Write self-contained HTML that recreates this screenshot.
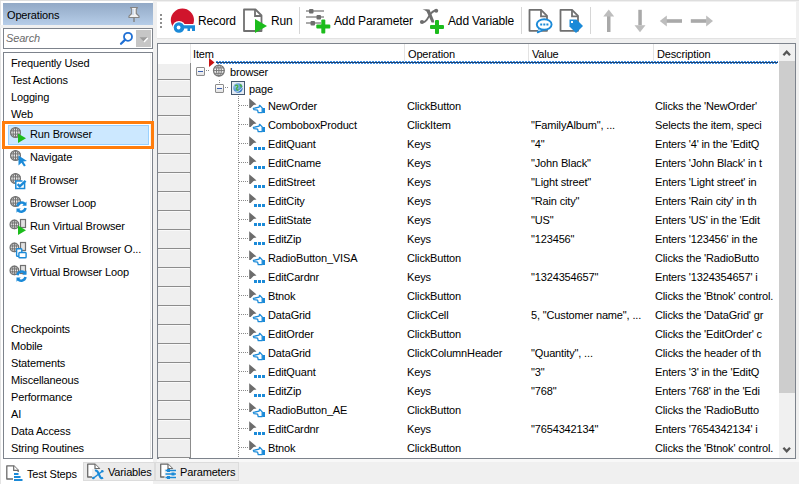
<!DOCTYPE html><html><head><meta charset="utf-8"><style>
*{margin:0;padding:0;box-sizing:border-box}
html,body{width:799px;height:484px;overflow:hidden;background:#f0f0f0;font-family:"Liberation Sans",sans-serif;font-size:11px;color:#000}
.a{position:absolute}
.t{position:absolute;white-space:nowrap;letter-spacing:-0.15px;line-height:14px}
svg{position:absolute;overflow:visible}
</style></head><body>
<div class="a" style="left:0px;top:0px;width:153px;height:484px;background:#fff;border-left:1px solid #e3e3e3"></div>
<div class="a" style="left:0px;top:0px;width:799px;height:1px;background:#dedede"></div>
<div class="a" style="left:0px;top:25px;width:153px;height:3px;background:#f0f0f0"></div>
<div class="a" style="left:3px;top:3px;width:150px;height:22px;background:linear-gradient(#92a9c6,#b6cde8)"></div>
<div class="t" style="left:7px;top:8px;">Operations</div>
<svg style="left:126px;top:6px" width="16" height="16" viewBox="0 0 16 16"><path d="M4.5 1.5h7l-1.2 1.6v4.4l2.7 2.7v1.3H3v-1.3l2.7-2.7V3.1z" fill="#f2f2f2" stroke="#858585" stroke-width="1.2" stroke-linejoin="round"/><path d="M7 3v6" stroke="#c8d8ec" stroke-width="1.5"/><path d="M8 11.5v4.5" stroke="#858585" stroke-width="1.5"/></svg>
<div class="a" style="left:3px;top:28px;width:150px;height:21px;background:#fff;border:1px solid #7d838c"></div>
<div class="t" style="left:6px;top:31px;font-style:italic;color:#6a6a6a">Search</div>
<svg style="left:117px;top:30px" width="16" height="16" viewBox="0 0 16 16"><circle cx="11" cy="6.8" r="4" fill="none" stroke="#1f6fd4" stroke-width="1.8"/><path d="M8.2 9.6L4 13.8" stroke="#1f6fd4" stroke-width="2.2" stroke-linecap="round"/></svg>
<div class="a" style="left:136px;top:30px;width:15px;height:17px;background:#c6c6c6"></div>
<svg style="left:136px;top:30px" width="15" height="17" viewBox="0 0 15 17"><path d="M3.5 7.3h8l-4 4z" fill="#9c9c9c"/><path d="M8 12l3.8-4" stroke="#fff" stroke-width="1.3"/></svg>
<div class="a" style="left:3px;top:52px;width:150px;height:407px;background:#fff;border:1px solid #7d838c"></div>
<div class="a" style="left:150px;top:53px;width:1px;height:266px;background:#f3f3f3"></div>
<div class="a" style="left:150px;top:319px;width:1px;height:139px;background:#e4e4e4"></div>
<div class="t" style="left:11px;top:56px;">Frequently Used</div>
<div class="t" style="left:11px;top:73px;">Test Actions</div>
<div class="t" style="left:11px;top:90px;">Logging</div>
<div class="t" style="left:11px;top:107px;">Web</div>
<div class="a" style="left:2px;top:121px;width:152px;height:28px;border:3px solid #ff7d0c"></div>
<div class="a" style="left:8px;top:125px;width:141px;height:20px;background:#cce8ff;border:1px solid #99d1ff"></div>
<div class="t" style="left:30px;top:127px;">Run Browser</div>
<svg style="left:0px;top:0px" width="30" height="1" viewBox="0 0 30 1"><circle cx="15.5" cy="132.5" r="4.9" fill="#e9e9e9" stroke="#737373" stroke-width="1.3"/><ellipse cx="15.5" cy="132.5" rx="2.31" ry="4.9" fill="none" stroke="#737373" stroke-width="1"/><path d="M15.5 127.6v9.8M10.6 130.85h9.8M10.6 134.15h9.8" stroke="#737373" stroke-width="1"/><path d="M18 133.5v9.5l8-4.75z" fill="#1cbc1c"/></svg>
<div class="t" style="left:30px;top:150px;">Navigate</div>
<svg style="left:0px;top:0px" width="30" height="1" viewBox="0 0 30 1"><circle cx="15.5" cy="155.5" r="4.9" fill="#e9e9e9" stroke="#737373" stroke-width="1.3"/><ellipse cx="15.5" cy="155.5" rx="2.31" ry="4.9" fill="none" stroke="#737373" stroke-width="1"/><path d="M15.5 150.6v9.8M10.6 153.85h9.8M10.6 157.15h9.8" stroke="#737373" stroke-width="1"/><path d="M18.5 155.5l8.5 5.5-3.8.6 2.6 3.9-1.8 1.1-2.5-3.9-3 2.7z" fill="#1b8ad8"/></svg>
<div class="t" style="left:30px;top:173px;">If Browser</div>
<svg style="left:0px;top:0px" width="30" height="1" viewBox="0 0 30 1"><circle cx="15.5" cy="178.5" r="4.9" fill="#e9e9e9" stroke="#737373" stroke-width="1.3"/><ellipse cx="15.5" cy="178.5" rx="2.31" ry="4.9" fill="none" stroke="#737373" stroke-width="1"/><path d="M15.5 173.6v9.8M10.6 176.85h9.8M10.6 180.15h9.8" stroke="#737373" stroke-width="1"/><rect x="15.8" y="181" width="8.8" height="7.5" fill="#fff" stroke="#1b8ad8" stroke-width="1.5"/><rect x="22.5" y="179.5" width="4" height="3.5" fill="#fff"/><path d="M17.6 184.2l2.2 2.2 5.8-5.6" fill="none" stroke="#1b8ad8" stroke-width="2.4"/></svg>
<div class="t" style="left:30px;top:196px;">Browser Loop</div>
<svg style="left:0px;top:0px" width="30" height="1" viewBox="0 0 30 1"><circle cx="15.5" cy="201.5" r="4.9" fill="#e9e9e9" stroke="#737373" stroke-width="1.3"/><ellipse cx="15.5" cy="201.5" rx="2.31" ry="4.9" fill="none" stroke="#737373" stroke-width="1"/><path d="M15.5 196.6v9.8M10.6 199.85h9.8M10.6 203.15h9.8" stroke="#737373" stroke-width="1"/><g transform="translate(16.5,200) scale(0.95) translate(-10,-5.5)"><path d="M11 12a4.5 4.5 0 0 1 8-2" fill="none" stroke="#1b8ad8" stroke-width="2.6"/><path d="M20.5 7v4.5h-4.5z" fill="#1b8ad8"/><path d="M19.5 14a4.5 4.5 0 0 1-8 2" fill="none" stroke="#1b8ad8" stroke-width="2.6"/><path d="M10 19v-4.5h4.5z" fill="#1b8ad8"/></g></svg>
<div class="t" style="left:30px;top:219px;">Run Virtual Browser</div>
<svg style="left:0px;top:0px" width="30" height="1" viewBox="0 0 30 1"><rect x="20.5" y="219.5" width="5" height="8" fill="#e2e2e2" stroke="#707070" stroke-width="1.2"/><circle cx="14.4" cy="224.4" r="4.300000000000001" fill="#e9e9e9" stroke="#737373" stroke-width="1.3"/><ellipse cx="14.4" cy="224.4" rx="2.0580000000000003" ry="4.300000000000001" fill="none" stroke="#737373" stroke-width="1"/><path d="M14.4 220.1v8.600000000000001M10.1 222.93h8.600000000000001M10.1 225.87h8.600000000000001" stroke="#737373" stroke-width="1"/><path d="M18 225.5v9.5l8-4.75z" fill="#1cbc1c"/></svg>
<div class="t" style="left:30px;top:242px;">Set Virtual Browser O...</div>
<svg style="left:0px;top:0px" width="30" height="1" viewBox="0 0 30 1"><rect x="20.5" y="242.5" width="5" height="8" fill="#e2e2e2" stroke="#707070" stroke-width="1.2"/><circle cx="14.4" cy="247.4" r="4.300000000000001" fill="#e9e9e9" stroke="#737373" stroke-width="1.3"/><ellipse cx="14.4" cy="247.4" rx="2.0580000000000003" ry="4.300000000000001" fill="none" stroke="#737373" stroke-width="1"/><path d="M14.4 243.1v8.600000000000001M10.1 245.93h8.600000000000001M10.1 248.87h8.600000000000001" stroke="#737373" stroke-width="1"/><rect x="16.6" y="248.8" width="5.2" height="7.4" rx="0.8" fill="#fff" stroke="#1b8ad8" stroke-width="1.4"/><rect x="18.9" y="252.5" width="7.2" height="5.3" rx="0.8" fill="#fff" stroke="#1b8ad8" stroke-width="1.4"/></svg>
<div class="t" style="left:30px;top:265px;">Virtual Browser Loop</div>
<svg style="left:0px;top:0px" width="30" height="1" viewBox="0 0 30 1"><rect x="20.5" y="265.5" width="5" height="8" fill="#e2e2e2" stroke="#707070" stroke-width="1.2"/><circle cx="14.4" cy="270.4" r="4.300000000000001" fill="#e9e9e9" stroke="#737373" stroke-width="1.3"/><ellipse cx="14.4" cy="270.4" rx="2.0580000000000003" ry="4.300000000000001" fill="none" stroke="#737373" stroke-width="1"/><path d="M14.4 266.1v8.600000000000001M10.1 268.92999999999995h8.600000000000001M10.1 271.87h8.600000000000001" stroke="#737373" stroke-width="1"/><g transform="translate(16.5,269) scale(0.95) translate(-10,-5.5)"><path d="M11 12a4.5 4.5 0 0 1 8-2" fill="none" stroke="#1b8ad8" stroke-width="2.6"/><path d="M20.5 7v4.5h-4.5z" fill="#1b8ad8"/><path d="M19.5 14a4.5 4.5 0 0 1-8 2" fill="none" stroke="#1b8ad8" stroke-width="2.6"/><path d="M10 19v-4.5h4.5z" fill="#1b8ad8"/></g></svg>
<div class="t" style="left:11px;top:322px;">Checkpoints</div>
<div class="t" style="left:11px;top:339px;">Mobile</div>
<div class="t" style="left:11px;top:356px;">Statements</div>
<div class="t" style="left:11px;top:373px;">Miscellaneous</div>
<div class="t" style="left:11px;top:390px;">Performance</div>
<div class="t" style="left:11px;top:407px;">AI</div>
<div class="t" style="left:11px;top:424px;">Data Access</div>
<div class="t" style="left:11px;top:441px;">String Routines</div>
<div class="a" style="left:157px;top:2px;width:639px;height:37px;background:#fff"></div>
<div class="a" style="left:157px;top:38px;width:639px;height:1px;background:#e2e2e2"></div>
<div class="a" style="left:160px;top:14px;width:2px;height:2px;background:#8f8f8f"></div>
<div class="a" style="left:160px;top:18px;width:2px;height:2px;background:#8f8f8f"></div>
<div class="a" style="left:160px;top:22px;width:2px;height:2px;background:#8f8f8f"></div>
<div class="a" style="left:160px;top:26px;width:2px;height:2px;background:#8f8f8f"></div>
<svg style="left:168px;top:6px" width="30" height="30" viewBox="0 0 30 30"><circle cx="14.4" cy="14.1" r="11.6" fill="#d0142c"/><circle cx="11" cy="21.5" r="6.6" fill="#fff"/><path d="M14 18h14v9H14z" fill="#fff"/><circle cx="11" cy="21.5" r="5.3" fill="#1b8ad8"/><circle cx="10.6" cy="21.5" r="1.9" fill="#fff"/><path d="M14 19.2h13v3.3H14zM19.5 22h2.5v3H19.5zM24 22h3v3h-3z" fill="#1b8ad8"/></svg>
<div class="t" style="left:198px;top:14px;font-size:12px">Record</div>
<svg style="left:240px;top:6px" width="32" height="30" viewBox="0 0 32 30"><path d="M4 3.5h11.5l6 6V25H4z" fill="#fff" stroke="#707070" stroke-width="1.8" stroke-linejoin="round"/><path d="M15 3.5v6.5h6.5" fill="none" stroke="#707070" stroke-width="1.8"/><path d="M15 13v14l12-7z" fill="#1cbc1c"/></svg>
<div class="t" style="left:271px;top:14px;font-size:12px">Run</div>
<div class="a" style="left:299px;top:7px;width:1px;height:27px;background:#d6d6d6"></div>
<svg style="left:304px;top:6px" width="30" height="30" viewBox="0 0 30 30"><path d="M2 5h18M2 11h18M2 17h18" stroke="#8e8e8e" stroke-width="1.7"/><rect x="5" y="3" width="4.5" height="4.5" rx="1" fill="#6e6e6e"/><rect x="12.5" y="9" width="4.5" height="4.5" rx="1" fill="#6e6e6e"/><rect x="6.5" y="15" width="4.5" height="4.5" rx="1" fill="#6e6e6e"/><path d="M17 13.5h5v5h5v5h-5v5h-5v-5h-5v-5h5z" fill="#fff"/><rect x="17.3" y="13.5" width="4" height="14" rx="1" fill="#1cbc1c"/><rect x="12.3" y="18.5" width="14" height="4" rx="1" fill="#1cbc1c"/></svg>
<div class="t" style="left:334px;top:14px;font-size:12px">Add Parameter</div>
<svg style="left:418px;top:6px" width="30" height="30" viewBox="0 0 30 30"><path d="M4.5 3.6Q8 3 11.5 3.5L16.8 16.6H13.6L8.6 5.6Q7 4.3 4.5 3.6z" fill="#6e6e6e"/><path d="M18.5 4.5Q14.5 4.5 11.5 9.5L8.5 14.2Q6 17 3.8 16.3" fill="none" stroke="#6e6e6e" stroke-width="1.8"/><circle cx="18.2" cy="4.8" r="2" fill="#6e6e6e"/><circle cx="4" cy="16" r="2.1" fill="#6e6e6e"/><path d="M17 14h4v5h5v4h-5v5h-4v-5h-5v-4h5z" fill="#fff" stroke="#fff" stroke-width="1.5"/><rect x="17" y="14" width="4" height="14" rx="1" fill="#1cbc1c"/><rect x="12" y="19" width="14" height="4" rx="1" fill="#1cbc1c"/></svg>
<div class="t" style="left:448px;top:14px;font-size:12px">Add Variable</div>
<div class="a" style="left:521px;top:7px;width:1px;height:27px;background:#d6d6d6"></div>
<svg style="left:527px;top:8px" width="60" height="28" viewBox="0 0 60 28"><path d="M2.5 1.8h11.5l6 6V22.8H2.5z" fill="#fff" stroke="#707070" stroke-width="1.8" stroke-linejoin="round"/><path d="M14 1.8v6.5h6" fill="none" stroke="#707070" stroke-width="1.8"/><path d="M12.5 20l-1.8 4.5 5-2.3" fill="#fff" stroke="#1b8ad8" stroke-width="1.6" stroke-linejoin="round"/><ellipse cx="17.2" cy="16.5" rx="7.4" ry="5.2" fill="#fff" stroke="#1b8ad8" stroke-width="1.9"/><path d="M11.5 21.3l-.6 1.8 2.2-1" fill="#fff"/><path d="M13.2 16.5h2M16.3 16.5h2M19.4 16.5h2" stroke="#1b8ad8" stroke-width="2"/><path d="M33.5 1.8h11.5l6 6V22.8H33.5z" fill="#fff" stroke="#707070" stroke-width="1.8" stroke-linejoin="round"/><path d="M45 1.8v6.5h6" fill="none" stroke="#707070" stroke-width="1.8"/><path d="M42.5 11.5h7l6.5 6.5-7 7-6.5-6.5z" fill="#1b8ad8"/><rect x="44" y="13" width="2" height="2" fill="#fff"/></svg>
<div class="a" style="left:590px;top:7px;width:1px;height:27px;background:#d6d6d6"></div>
<svg style="left:600px;top:6px" width="120" height="30" viewBox="0 0 120 30"><rect x="7" y="9.5" width="3.5" height="16.5" fill="#a9a9a9"/><path d="M3.3 10.5L8.75 3.5 14.2 10.5z" fill="#bdbdbd"/><rect x="38.3" y="3.8" width="3.5" height="15.5" fill="#a9a9a9"/><path d="M34.5 19.2h11L40 26.2z" fill="#bdbdbd"/><rect x="66" y="13.2" width="16" height="3.6" fill="#a9a9a9"/><path d="M59.8 15L66.8 9.5V20.5z" fill="#bdbdbd"/><rect x="90.8" y="13.2" width="16" height="3.6" fill="#a9a9a9"/><path d="M113 15L106.2 9.5V20.5z" fill="#bdbdbd"/></svg>
<div class="a" style="left:157px;top:43px;width:639px;height:416px;background:#fff;border:1px solid #7d838c"></div>
<div class="t" style="left:193px;top:47px;">Item</div>
<div class="t" style="left:408px;top:47px;">Operation</div>
<div class="t" style="left:532px;top:47px;">Value</div>
<div class="t" style="left:657px;top:47px;">Description</div>
<div class="a" style="left:404px;top:44px;width:1px;height:17px;background:#e3e3e3"></div>
<div class="a" style="left:528px;top:44px;width:1px;height:17px;background:#e3e3e3"></div>
<div class="a" style="left:653px;top:44px;width:1px;height:17px;background:#e3e3e3"></div>
<div class="a" style="left:190px;top:44px;width:1px;height:20px;background:#e6e6e6"></div>
<div class="a" style="left:190px;top:63px;width:1px;height:395px;background:#8c8c8c"></div>
<div class="a" style="left:158px;top:64px;width:32px;height:394px;background:#efefef"></div>
<div class="a" style="left:158px;top:79px;width:32px;height:1px;background:#8c8c8c"></div>
<div class="a" style="left:159px;top:80px;width:30px;height:1px;background:#f9f9f9"></div>
<div class="a" style="left:158px;top:96px;width:32px;height:1px;background:#8c8c8c"></div>
<div class="a" style="left:159px;top:97px;width:30px;height:1px;background:#f9f9f9"></div>
<div class="a" style="left:158px;top:115px;width:32px;height:1px;background:#8c8c8c"></div>
<div class="a" style="left:159px;top:116px;width:30px;height:1px;background:#f9f9f9"></div>
<div class="a" style="left:158px;top:134px;width:32px;height:1px;background:#8c8c8c"></div>
<div class="a" style="left:159px;top:135px;width:30px;height:1px;background:#f9f9f9"></div>
<div class="a" style="left:158px;top:153px;width:32px;height:1px;background:#8c8c8c"></div>
<div class="a" style="left:159px;top:154px;width:30px;height:1px;background:#f9f9f9"></div>
<div class="a" style="left:158px;top:172px;width:32px;height:1px;background:#8c8c8c"></div>
<div class="a" style="left:159px;top:173px;width:30px;height:1px;background:#f9f9f9"></div>
<div class="a" style="left:158px;top:191px;width:32px;height:1px;background:#8c8c8c"></div>
<div class="a" style="left:159px;top:192px;width:30px;height:1px;background:#f9f9f9"></div>
<div class="a" style="left:158px;top:210px;width:32px;height:1px;background:#8c8c8c"></div>
<div class="a" style="left:159px;top:211px;width:30px;height:1px;background:#f9f9f9"></div>
<div class="a" style="left:158px;top:229px;width:32px;height:1px;background:#8c8c8c"></div>
<div class="a" style="left:159px;top:230px;width:30px;height:1px;background:#f9f9f9"></div>
<div class="a" style="left:158px;top:248px;width:32px;height:1px;background:#8c8c8c"></div>
<div class="a" style="left:159px;top:249px;width:30px;height:1px;background:#f9f9f9"></div>
<div class="a" style="left:158px;top:267px;width:32px;height:1px;background:#8c8c8c"></div>
<div class="a" style="left:159px;top:268px;width:30px;height:1px;background:#f9f9f9"></div>
<div class="a" style="left:158px;top:286px;width:32px;height:1px;background:#8c8c8c"></div>
<div class="a" style="left:159px;top:287px;width:30px;height:1px;background:#f9f9f9"></div>
<div class="a" style="left:158px;top:305px;width:32px;height:1px;background:#8c8c8c"></div>
<div class="a" style="left:159px;top:306px;width:30px;height:1px;background:#f9f9f9"></div>
<div class="a" style="left:158px;top:324px;width:32px;height:1px;background:#8c8c8c"></div>
<div class="a" style="left:159px;top:325px;width:30px;height:1px;background:#f9f9f9"></div>
<div class="a" style="left:158px;top:343px;width:32px;height:1px;background:#8c8c8c"></div>
<div class="a" style="left:159px;top:344px;width:30px;height:1px;background:#f9f9f9"></div>
<div class="a" style="left:158px;top:362px;width:32px;height:1px;background:#8c8c8c"></div>
<div class="a" style="left:159px;top:363px;width:30px;height:1px;background:#f9f9f9"></div>
<div class="a" style="left:158px;top:381px;width:32px;height:1px;background:#8c8c8c"></div>
<div class="a" style="left:159px;top:382px;width:30px;height:1px;background:#f9f9f9"></div>
<div class="a" style="left:158px;top:400px;width:32px;height:1px;background:#8c8c8c"></div>
<div class="a" style="left:159px;top:401px;width:30px;height:1px;background:#f9f9f9"></div>
<div class="a" style="left:158px;top:419px;width:32px;height:1px;background:#8c8c8c"></div>
<div class="a" style="left:159px;top:420px;width:30px;height:1px;background:#f9f9f9"></div>
<div class="a" style="left:158px;top:438px;width:32px;height:1px;background:#8c8c8c"></div>
<div class="a" style="left:159px;top:439px;width:30px;height:1px;background:#f9f9f9"></div>
<div class="a" style="left:158px;top:457px;width:32px;height:1px;background:#8c8c8c"></div>
<div class="a" style="left:159px;top:458px;width:30px;height:1px;background:#f9f9f9"></div>
<div class="a" style="left:779px;top:44px;width:16px;height:414px;background:#f0f0f0"></div>
<div class="a" style="left:779px;top:61px;width:16px;height:332px;background:#cdcdcd"></div>
<svg style="left:779px;top:44px" width="16" height="17" viewBox="0 0 16 17"><path d="M4.4 11.2L7.7 7.6 11 11.2" fill="none" stroke="#555" stroke-width="2.3"/></svg>
<svg style="left:779px;top:441px" width="16" height="17" viewBox="0 0 16 17"><path d="M4.4 6.8L7.7 10.4 11 6.8" fill="none" stroke="#555" stroke-width="2.3"/></svg>
<div class="a" style="left:216px;top:61px;width:562px;height:1px;background:repeating-linear-gradient(90deg,#3d8fe8 0 2px,transparent 2px 3px)"></div>
<div class="a" style="left:216px;top:62px;width:562px;height:1px;background:#20446e"></div>
<div class="a" style="left:217px;top:63px;width:561px;height:1px;background:repeating-linear-gradient(90deg,#3d8fe8 0 2px,transparent 2px 3px)"></div>
<svg style="left:208px;top:57px" width="8" height="11" viewBox="0 0 8 11"><path d="M1 1l5.5 4.5L1 10z" fill="#c81414"/></svg>
<div class="a" style="left:206px;top:70px;width:4px;height:1px;background:repeating-linear-gradient(90deg,#8a8a8a 0 1px,transparent 1px 2px)"></div>
<div class="a" style="left:219px;top:80px;width:1px;height:4px;background:repeating-linear-gradient(#8a8a8a 0 1px,transparent 1px 2px)"></div>
<div class="a" style="left:225px;top:87px;width:4px;height:1px;background:repeating-linear-gradient(90deg,#8a8a8a 0 1px,transparent 1px 2px)"></div>
<div class="a" style="left:238px;top:96px;width:1px;height:363px;background:repeating-linear-gradient(#8a8a8a 0 1px,transparent 1px 2px)"></div>
<div class="a" style="left:196px;top:67px;width:9px;height:9px;border:1px solid #8c8c8c;border-radius:1px;background:linear-gradient(#fff,#e3e3e3)"></div>
<div class="a" style="left:198px;top:71px;width:5px;height:1px;background:#3a5fb0"></div>
<div class="a" style="left:215px;top:84px;width:9px;height:9px;border:1px solid #8c8c8c;border-radius:1px;background:linear-gradient(#fff,#e3e3e3)"></div>
<div class="a" style="left:217px;top:88px;width:5px;height:1px;background:#3a5fb0"></div>
<svg style="left:212px;top:64px" width="14" height="14" viewBox="0 0 14 14"><circle cx="6.9" cy="6.6" r="5.4" fill="#f4f4f4" stroke="#777" stroke-width="1.3"/><ellipse cx="6.9" cy="6.6" rx="2.43" ry="5.4" fill="none" stroke="#777" stroke-width="1"/><path d="M1.5 6.6h10.8M2.5 3.8999999999999995h8.8M2.5 9.3h8.8M6.9 1.1999999999999993v10.8" stroke="#777" stroke-width="1"/></svg>
<svg style="left:231px;top:81px" width="15" height="14" viewBox="0 0 15 14"><defs><radialGradient id="pg" cx="0.35" cy="0.35" r="0.7"><stop offset="0" stop-color="#9fd0f5"/><stop offset="1" stop-color="#2a72c0"/></radialGradient></defs><rect x="0.5" y="0.5" width="13" height="13" fill="#e4ebf3" stroke="#45586f"/><circle cx="7" cy="7" r="4.8" fill="url(#pg)"/><path d="M4.2 4.8c1.2-1 2.6-.6 2.6.8s-1.8 1-1.3 2.3 1.8 1 2.2 1.8M8.8 3.5c.9.5 1.8 1.4 1.6 2.8" stroke="#4eb04a" stroke-width="1.5" fill="none"/><path d="M2.2 10.2c2 1.5 6.5.8 9.8-4.5" stroke="#e8f0ff" stroke-width="0.8" fill="none"/></svg>
<div class="t" style="left:230px;top:65px;">browser</div>
<div class="t" style="left:249px;top:82px;">page</div>
<div class="t" style="left:268px;top:99px;">NewOrder</div>
<div class="t" style="left:407px;top:99px;">ClickButton</div>
<div class="t" style="left:531px;top:99px;"></div>
<div class="t" style="left:655px;top:99px;">Clicks the 'NewOrder'</div>
<div class="a" style="left:239px;top:105px;width:9px;height:1px;background:repeating-linear-gradient(90deg,#8a8a8a 0 1px,transparent 1px 2px)"></div>
<svg style="left:249px;top:98px" width="18" height="16" viewBox="0 0 18 16"><path d="M0.2 0.2L7.5 6.5 4.6 7 1.6 9.9H0.2z" fill="#6c6c6c"/><path d="M4.4 10.4L10 9.2 10.6 7.3 13.2 9.9V14.6H9.2L8.6 12.1 5 11.7z" fill="#fff" stroke="#1b8ad8" stroke-width="1.3" stroke-linejoin="round"/><rect x="13.4" y="10" width="2.6" height="5" fill="#1b8ad8"/></svg>
<div class="t" style="left:268px;top:118px;">ComboboxProduct</div>
<div class="t" style="left:407px;top:118px;">ClickItem</div>
<div class="t" style="left:531px;top:118px;">"FamilyAlbum", ...</div>
<div class="t" style="left:655px;top:118px;">Selects the item, speci</div>
<div class="a" style="left:239px;top:124px;width:9px;height:1px;background:repeating-linear-gradient(90deg,#8a8a8a 0 1px,transparent 1px 2px)"></div>
<svg style="left:249px;top:117px" width="18" height="16" viewBox="0 0 18 16"><path d="M0.2 0.2L7.5 6.5 4.6 7 1.6 9.9H0.2z" fill="#6c6c6c"/><path d="M4.4 10.4L10 9.2 10.6 7.3 13.2 9.9V14.6H9.2L8.6 12.1 5 11.7z" fill="#fff" stroke="#1b8ad8" stroke-width="1.3" stroke-linejoin="round"/><rect x="13.4" y="10" width="2.6" height="5" fill="#1b8ad8"/></svg>
<div class="t" style="left:268px;top:137px;">EditQuant</div>
<div class="t" style="left:407px;top:137px;">Keys</div>
<div class="t" style="left:531px;top:137px;">"4"</div>
<div class="t" style="left:655px;top:137px;">Enters '4' in the 'EditQ</div>
<div class="a" style="left:239px;top:143px;width:9px;height:1px;background:repeating-linear-gradient(90deg,#8a8a8a 0 1px,transparent 1px 2px)"></div>
<svg style="left:249px;top:136px" width="18" height="16" viewBox="0 0 18 16"><path d="M0.2 0.2L7.5 6.5 4.6 7 1.6 9.9H0.2z" fill="#6c6c6c"/><rect x="5" y="11" width="3" height="3" fill="#1b8ad8"/><rect x="9" y="11" width="3" height="3" fill="#1b8ad8"/><rect x="13" y="11" width="3" height="3" fill="#1b8ad8"/></svg>
<div class="t" style="left:268px;top:156px;">EditCname</div>
<div class="t" style="left:407px;top:156px;">Keys</div>
<div class="t" style="left:531px;top:156px;">"John Black"</div>
<div class="t" style="left:655px;top:156px;">Enters 'John Black' in t</div>
<div class="a" style="left:239px;top:162px;width:9px;height:1px;background:repeating-linear-gradient(90deg,#8a8a8a 0 1px,transparent 1px 2px)"></div>
<svg style="left:249px;top:155px" width="18" height="16" viewBox="0 0 18 16"><path d="M0.2 0.2L7.5 6.5 4.6 7 1.6 9.9H0.2z" fill="#6c6c6c"/><rect x="5" y="11" width="3" height="3" fill="#1b8ad8"/><rect x="9" y="11" width="3" height="3" fill="#1b8ad8"/><rect x="13" y="11" width="3" height="3" fill="#1b8ad8"/></svg>
<div class="t" style="left:268px;top:175px;">EditStreet</div>
<div class="t" style="left:407px;top:175px;">Keys</div>
<div class="t" style="left:531px;top:175px;">"Light street"</div>
<div class="t" style="left:655px;top:175px;">Enters 'Light street' in</div>
<div class="a" style="left:239px;top:181px;width:9px;height:1px;background:repeating-linear-gradient(90deg,#8a8a8a 0 1px,transparent 1px 2px)"></div>
<svg style="left:249px;top:174px" width="18" height="16" viewBox="0 0 18 16"><path d="M0.2 0.2L7.5 6.5 4.6 7 1.6 9.9H0.2z" fill="#6c6c6c"/><rect x="5" y="11" width="3" height="3" fill="#1b8ad8"/><rect x="9" y="11" width="3" height="3" fill="#1b8ad8"/><rect x="13" y="11" width="3" height="3" fill="#1b8ad8"/></svg>
<div class="t" style="left:268px;top:194px;">EditCity</div>
<div class="t" style="left:407px;top:194px;">Keys</div>
<div class="t" style="left:531px;top:194px;">"Rain city"</div>
<div class="t" style="left:655px;top:194px;">Enters 'Rain city' in th</div>
<div class="a" style="left:239px;top:200px;width:9px;height:1px;background:repeating-linear-gradient(90deg,#8a8a8a 0 1px,transparent 1px 2px)"></div>
<svg style="left:249px;top:193px" width="18" height="16" viewBox="0 0 18 16"><path d="M0.2 0.2L7.5 6.5 4.6 7 1.6 9.9H0.2z" fill="#6c6c6c"/><rect x="5" y="11" width="3" height="3" fill="#1b8ad8"/><rect x="9" y="11" width="3" height="3" fill="#1b8ad8"/><rect x="13" y="11" width="3" height="3" fill="#1b8ad8"/></svg>
<div class="t" style="left:268px;top:213px;">EditState</div>
<div class="t" style="left:407px;top:213px;">Keys</div>
<div class="t" style="left:531px;top:213px;">"US"</div>
<div class="t" style="left:655px;top:213px;">Enters 'US' in the 'Edit</div>
<div class="a" style="left:239px;top:219px;width:9px;height:1px;background:repeating-linear-gradient(90deg,#8a8a8a 0 1px,transparent 1px 2px)"></div>
<svg style="left:249px;top:212px" width="18" height="16" viewBox="0 0 18 16"><path d="M0.2 0.2L7.5 6.5 4.6 7 1.6 9.9H0.2z" fill="#6c6c6c"/><rect x="5" y="11" width="3" height="3" fill="#1b8ad8"/><rect x="9" y="11" width="3" height="3" fill="#1b8ad8"/><rect x="13" y="11" width="3" height="3" fill="#1b8ad8"/></svg>
<div class="t" style="left:268px;top:232px;">EditZip</div>
<div class="t" style="left:407px;top:232px;">Keys</div>
<div class="t" style="left:531px;top:232px;">"123456"</div>
<div class="t" style="left:655px;top:232px;">Enters '123456' in the</div>
<div class="a" style="left:239px;top:238px;width:9px;height:1px;background:repeating-linear-gradient(90deg,#8a8a8a 0 1px,transparent 1px 2px)"></div>
<svg style="left:249px;top:231px" width="18" height="16" viewBox="0 0 18 16"><path d="M0.2 0.2L7.5 6.5 4.6 7 1.6 9.9H0.2z" fill="#6c6c6c"/><rect x="5" y="11" width="3" height="3" fill="#1b8ad8"/><rect x="9" y="11" width="3" height="3" fill="#1b8ad8"/><rect x="13" y="11" width="3" height="3" fill="#1b8ad8"/></svg>
<div class="t" style="left:268px;top:251px;">RadioButton_VISA</div>
<div class="t" style="left:407px;top:251px;">ClickButton</div>
<div class="t" style="left:531px;top:251px;"></div>
<div class="t" style="left:655px;top:251px;">Clicks the 'RadioButto</div>
<div class="a" style="left:239px;top:257px;width:9px;height:1px;background:repeating-linear-gradient(90deg,#8a8a8a 0 1px,transparent 1px 2px)"></div>
<svg style="left:249px;top:250px" width="18" height="16" viewBox="0 0 18 16"><path d="M0.2 0.2L7.5 6.5 4.6 7 1.6 9.9H0.2z" fill="#6c6c6c"/><path d="M4.4 10.4L10 9.2 10.6 7.3 13.2 9.9V14.6H9.2L8.6 12.1 5 11.7z" fill="#fff" stroke="#1b8ad8" stroke-width="1.3" stroke-linejoin="round"/><rect x="13.4" y="10" width="2.6" height="5" fill="#1b8ad8"/></svg>
<div class="t" style="left:268px;top:270px;">EditCardnr</div>
<div class="t" style="left:407px;top:270px;">Keys</div>
<div class="t" style="left:531px;top:270px;">"1324354657"</div>
<div class="t" style="left:655px;top:270px;">Enters '1324354657' i</div>
<div class="a" style="left:239px;top:276px;width:9px;height:1px;background:repeating-linear-gradient(90deg,#8a8a8a 0 1px,transparent 1px 2px)"></div>
<svg style="left:249px;top:269px" width="18" height="16" viewBox="0 0 18 16"><path d="M0.2 0.2L7.5 6.5 4.6 7 1.6 9.9H0.2z" fill="#6c6c6c"/><rect x="5" y="11" width="3" height="3" fill="#1b8ad8"/><rect x="9" y="11" width="3" height="3" fill="#1b8ad8"/><rect x="13" y="11" width="3" height="3" fill="#1b8ad8"/></svg>
<div class="t" style="left:268px;top:289px;">Btnok</div>
<div class="t" style="left:407px;top:289px;">ClickButton</div>
<div class="t" style="left:531px;top:289px;"></div>
<div class="t" style="left:655px;top:289px;">Clicks the 'Btnok' control.</div>
<div class="a" style="left:239px;top:295px;width:9px;height:1px;background:repeating-linear-gradient(90deg,#8a8a8a 0 1px,transparent 1px 2px)"></div>
<svg style="left:249px;top:288px" width="18" height="16" viewBox="0 0 18 16"><path d="M0.2 0.2L7.5 6.5 4.6 7 1.6 9.9H0.2z" fill="#6c6c6c"/><path d="M4.4 10.4L10 9.2 10.6 7.3 13.2 9.9V14.6H9.2L8.6 12.1 5 11.7z" fill="#fff" stroke="#1b8ad8" stroke-width="1.3" stroke-linejoin="round"/><rect x="13.4" y="10" width="2.6" height="5" fill="#1b8ad8"/></svg>
<div class="t" style="left:268px;top:308px;">DataGrid</div>
<div class="t" style="left:407px;top:308px;">ClickCell</div>
<div class="t" style="left:531px;top:308px;">5, "Customer name", ...</div>
<div class="t" style="left:655px;top:308px;">Clicks the 'DataGrid' gr</div>
<div class="a" style="left:239px;top:314px;width:9px;height:1px;background:repeating-linear-gradient(90deg,#8a8a8a 0 1px,transparent 1px 2px)"></div>
<svg style="left:249px;top:307px" width="18" height="16" viewBox="0 0 18 16"><path d="M0.2 0.2L7.5 6.5 4.6 7 1.6 9.9H0.2z" fill="#6c6c6c"/><path d="M4.4 10.4L10 9.2 10.6 7.3 13.2 9.9V14.6H9.2L8.6 12.1 5 11.7z" fill="#fff" stroke="#1b8ad8" stroke-width="1.3" stroke-linejoin="round"/><rect x="13.4" y="10" width="2.6" height="5" fill="#1b8ad8"/></svg>
<div class="t" style="left:268px;top:327px;">EditOrder</div>
<div class="t" style="left:407px;top:327px;">ClickButton</div>
<div class="t" style="left:531px;top:327px;"></div>
<div class="t" style="left:655px;top:327px;">Clicks the 'EditOrder' c</div>
<div class="a" style="left:239px;top:333px;width:9px;height:1px;background:repeating-linear-gradient(90deg,#8a8a8a 0 1px,transparent 1px 2px)"></div>
<svg style="left:249px;top:326px" width="18" height="16" viewBox="0 0 18 16"><path d="M0.2 0.2L7.5 6.5 4.6 7 1.6 9.9H0.2z" fill="#6c6c6c"/><path d="M4.4 10.4L10 9.2 10.6 7.3 13.2 9.9V14.6H9.2L8.6 12.1 5 11.7z" fill="#fff" stroke="#1b8ad8" stroke-width="1.3" stroke-linejoin="round"/><rect x="13.4" y="10" width="2.6" height="5" fill="#1b8ad8"/></svg>
<div class="t" style="left:268px;top:346px;">DataGrid</div>
<div class="t" style="left:407px;top:346px;">ClickColumnHeader</div>
<div class="t" style="left:531px;top:346px;">"Quantity", ...</div>
<div class="t" style="left:655px;top:346px;">Clicks the header of th</div>
<div class="a" style="left:239px;top:352px;width:9px;height:1px;background:repeating-linear-gradient(90deg,#8a8a8a 0 1px,transparent 1px 2px)"></div>
<svg style="left:249px;top:345px" width="18" height="16" viewBox="0 0 18 16"><path d="M0.2 0.2L7.5 6.5 4.6 7 1.6 9.9H0.2z" fill="#6c6c6c"/><path d="M4.4 10.4L10 9.2 10.6 7.3 13.2 9.9V14.6H9.2L8.6 12.1 5 11.7z" fill="#fff" stroke="#1b8ad8" stroke-width="1.3" stroke-linejoin="round"/><rect x="13.4" y="10" width="2.6" height="5" fill="#1b8ad8"/></svg>
<div class="t" style="left:268px;top:365px;">EditQuant</div>
<div class="t" style="left:407px;top:365px;">Keys</div>
<div class="t" style="left:531px;top:365px;">"3"</div>
<div class="t" style="left:655px;top:365px;">Enters '3' in the 'EditQ</div>
<div class="a" style="left:239px;top:371px;width:9px;height:1px;background:repeating-linear-gradient(90deg,#8a8a8a 0 1px,transparent 1px 2px)"></div>
<svg style="left:249px;top:364px" width="18" height="16" viewBox="0 0 18 16"><path d="M0.2 0.2L7.5 6.5 4.6 7 1.6 9.9H0.2z" fill="#6c6c6c"/><rect x="5" y="11" width="3" height="3" fill="#1b8ad8"/><rect x="9" y="11" width="3" height="3" fill="#1b8ad8"/><rect x="13" y="11" width="3" height="3" fill="#1b8ad8"/></svg>
<div class="t" style="left:268px;top:384px;">EditZip</div>
<div class="t" style="left:407px;top:384px;">Keys</div>
<div class="t" style="left:531px;top:384px;">"768"</div>
<div class="t" style="left:655px;top:384px;">Enters '768' in the 'Edi</div>
<div class="a" style="left:239px;top:390px;width:9px;height:1px;background:repeating-linear-gradient(90deg,#8a8a8a 0 1px,transparent 1px 2px)"></div>
<svg style="left:249px;top:383px" width="18" height="16" viewBox="0 0 18 16"><path d="M0.2 0.2L7.5 6.5 4.6 7 1.6 9.9H0.2z" fill="#6c6c6c"/><rect x="5" y="11" width="3" height="3" fill="#1b8ad8"/><rect x="9" y="11" width="3" height="3" fill="#1b8ad8"/><rect x="13" y="11" width="3" height="3" fill="#1b8ad8"/></svg>
<div class="t" style="left:268px;top:403px;">RadioButton_AE</div>
<div class="t" style="left:407px;top:403px;">ClickButton</div>
<div class="t" style="left:531px;top:403px;"></div>
<div class="t" style="left:655px;top:403px;">Clicks the 'RadioButto</div>
<div class="a" style="left:239px;top:409px;width:9px;height:1px;background:repeating-linear-gradient(90deg,#8a8a8a 0 1px,transparent 1px 2px)"></div>
<svg style="left:249px;top:402px" width="18" height="16" viewBox="0 0 18 16"><path d="M0.2 0.2L7.5 6.5 4.6 7 1.6 9.9H0.2z" fill="#6c6c6c"/><path d="M4.4 10.4L10 9.2 10.6 7.3 13.2 9.9V14.6H9.2L8.6 12.1 5 11.7z" fill="#fff" stroke="#1b8ad8" stroke-width="1.3" stroke-linejoin="round"/><rect x="13.4" y="10" width="2.6" height="5" fill="#1b8ad8"/></svg>
<div class="t" style="left:268px;top:422px;">EditCardnr</div>
<div class="t" style="left:407px;top:422px;">Keys</div>
<div class="t" style="left:531px;top:422px;">"7654342134"</div>
<div class="t" style="left:655px;top:422px;">Enters '7654342134' i</div>
<div class="a" style="left:239px;top:428px;width:9px;height:1px;background:repeating-linear-gradient(90deg,#8a8a8a 0 1px,transparent 1px 2px)"></div>
<svg style="left:249px;top:421px" width="18" height="16" viewBox="0 0 18 16"><path d="M0.2 0.2L7.5 6.5 4.6 7 1.6 9.9H0.2z" fill="#6c6c6c"/><rect x="5" y="11" width="3" height="3" fill="#1b8ad8"/><rect x="9" y="11" width="3" height="3" fill="#1b8ad8"/><rect x="13" y="11" width="3" height="3" fill="#1b8ad8"/></svg>
<div class="t" style="left:268px;top:441px;">Btnok</div>
<div class="t" style="left:407px;top:441px;">ClickButton</div>
<div class="t" style="left:531px;top:441px;"></div>
<div class="t" style="left:655px;top:441px;">Clicks the 'Btnok' control.</div>
<div class="a" style="left:239px;top:447px;width:9px;height:1px;background:repeating-linear-gradient(90deg,#8a8a8a 0 1px,transparent 1px 2px)"></div>
<svg style="left:249px;top:440px" width="18" height="16" viewBox="0 0 18 16"><path d="M0.2 0.2L7.5 6.5 4.6 7 1.6 9.9H0.2z" fill="#6c6c6c"/><path d="M4.4 10.4L10 9.2 10.6 7.3 13.2 9.9V14.6H9.2L8.6 12.1 5 11.7z" fill="#fff" stroke="#1b8ad8" stroke-width="1.3" stroke-linejoin="round"/><rect x="13.4" y="10" width="2.6" height="5" fill="#1b8ad8"/></svg>
<div class="a" style="left:157px;top:459px;width:642px;height:3px;background:#f8f8f8"></div>
<div class="a" style="left:3px;top:461px;width:80px;height:23px;background:#fff"></div>
<div class="a" style="left:83px;top:462px;width:72px;height:19px;background:#ebebeb;border:1px solid #dcdcdc"></div>
<div class="a" style="left:155px;top:462px;width:84px;height:19px;background:#ebebeb;border:1px solid #dcdcdc"></div>
<svg style="left:0px;top:0px" width="1" height="1" viewBox="0 0 1 1"><path d="M6.8 465.8H13.7L18.2 470.3V479H6.8Z" fill="#fff" stroke="#6b6b6b" stroke-width="1.3" stroke-linejoin="round"/><path d="M13.7 465.8V470.3H18.2" fill="#fff" stroke="#6b6b6b" stroke-width="1.2"/><rect x="13" y="472" width="8" height="9" fill="#fff"/><path d="M14 474h4.5M14 477h6.5M14 480h8.5" stroke="#1b8ad8" stroke-width="2"/></svg>
<div class="t" style="left:27px;top:467px;">Test Steps</div>
<svg style="left:0px;top:0px" width="1" height="1" viewBox="0 0 1 1"><path d="M87.7 464.2H95.0L99.5 468.7V477H87.7Z" fill="#fff" stroke="#6b6b6b" stroke-width="1.3" stroke-linejoin="round"/><path d="M95.0 464.2V468.7H99.5" fill="#fff" stroke="#6b6b6b" stroke-width="1.2"/><rect x="92" y="469" width="11" height="10" fill="#efefef"/><path d="M95 470.8Q96.5 470 97.5 471.5L100.5 477.5Q101.5 478.5 103 477.6" fill="none" stroke="#1b8ad8" stroke-width="2.2"/><path d="M102.5 471L93 478.5" stroke="#1b8ad8" stroke-width="1.5"/><circle cx="102.3" cy="471.3" r="1.3" fill="#1b8ad8"/><circle cx="93.3" cy="478" r="1.3" fill="#1b8ad8"/></svg>
<div class="t" style="left:108px;top:465px;">Variables</div>
<svg style="left:0px;top:0px" width="1" height="1" viewBox="0 0 1 1"><path d="M160.7 464.2H168.0L172.5 468.7V477H160.7Z" fill="#fff" stroke="#6b6b6b" stroke-width="1.3" stroke-linejoin="round"/><path d="M168.0 464.2V468.7H172.5" fill="#fff" stroke="#6b6b6b" stroke-width="1.2"/><rect x="164.5" y="469" width="12" height="10" fill="#efefef"/><path d="M165.5 470.5h10.5M165.5 474h10.5M165.5 477.5h10.5" stroke="#1b8ad8" stroke-width="1.3"/><rect x="167" y="469" width="3" height="3" fill="#1b8ad8"/><rect x="171.5" y="472.5" width="3" height="3" fill="#1b8ad8"/><rect x="167" y="476" width="3" height="3" fill="#1b8ad8"/></svg>
<div class="t" style="left:180px;top:465px;">Parameters</div>
</body></html>
